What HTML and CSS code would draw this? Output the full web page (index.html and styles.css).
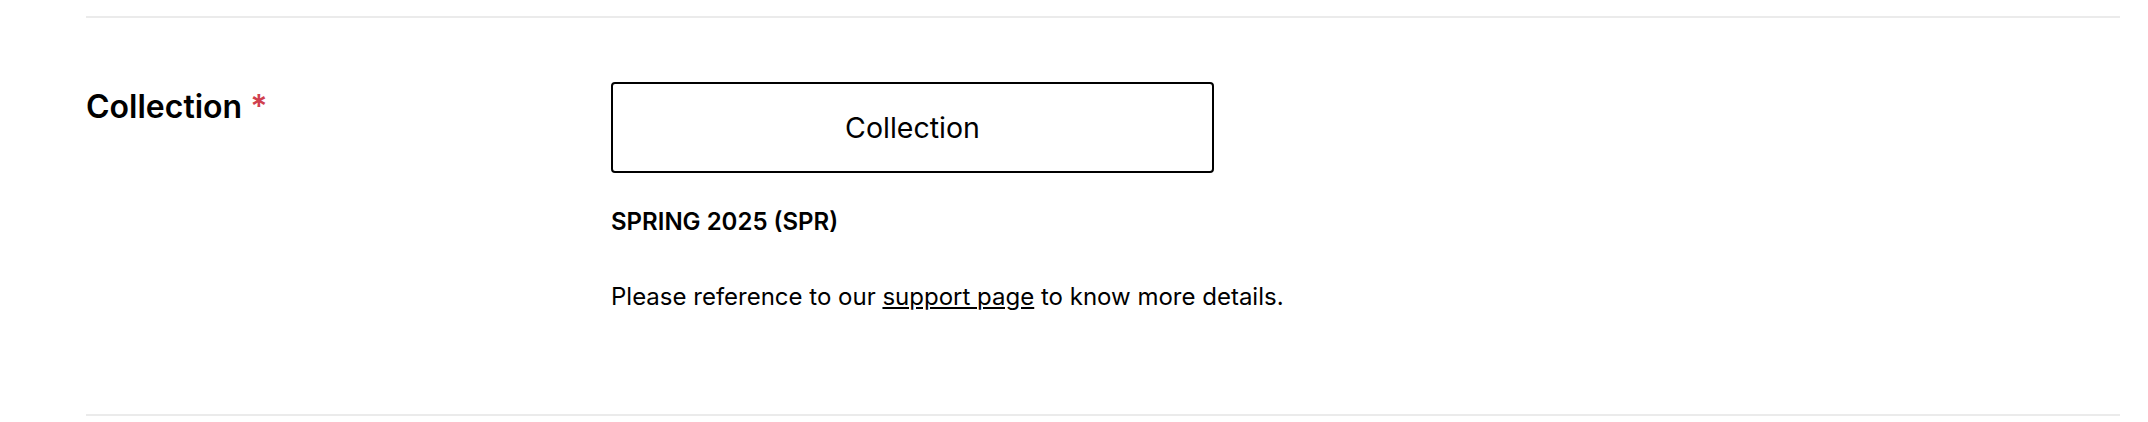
FILE: index.html
```html
<!DOCTYPE html>
<html lang="en">
<head>
  <meta charset="UTF-8" />
  <meta name="viewport" content="width=device-width, initial-scale=1.0"/>
  <title>Collection</title>
  <link rel="stylesheet" href="styles.css">
</head>
<body>

  <div class="page">
    <section class="field-row">
      <div class="field-label">
        <h2>Collection <span class="req">*</span></h2>
      </div>
      <div class="field-body">
        <button type="button" class="picker">Collection</button>
        <p class="selected">SPRING 2025 (SPR)</p>
        <p class="hint">Please reference to our <a href="#">support page</a> to know more details.</p>
      </div>
    </section>
  </div>

</body>
</html>
```

FILE: styles.css
```css
body { margin: 0; background: #fff; color: #000; font-family: Inter, "Noto Sans", sans-serif; }
.page { padding: 16px 28px 0 86px; }
.field-row { display: grid; grid-template-columns: 525px 1fr; border-top: 2px solid #ebebeb; border-bottom: 2px solid #ebebeb; padding: 64px 0 103px; }
.field-label h2 { margin: 5px 0 0; font-size: 32px; font-weight: 600; line-height: 39px; }
.req { color: #d0404f; }
.field-body { display: flex; flex-direction: column; align-items: flex-start; }
.picker { width: 603px; height: 91px; padding: 0; border: 2px solid #000; border-radius: 4px; background: #fff; color: #000; font-family: inherit; font-size: 28.5px; cursor: pointer; }
.selected { margin: 34px 0 0; font-size: 24px; font-weight: 600; line-height: 29px; }
.hint { margin: 46px 0 0; font-size: 24px; line-height: 29px; }
.hint a { color: inherit; text-decoration: underline; }
```
